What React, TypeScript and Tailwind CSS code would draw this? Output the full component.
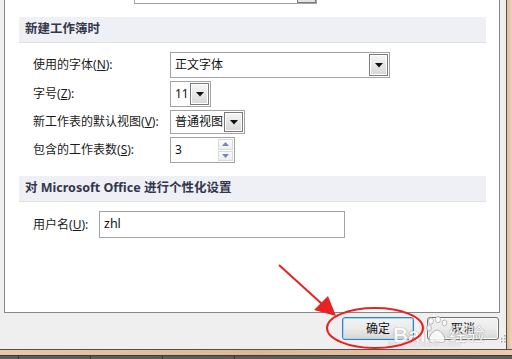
const font = "font-['Noto_Sans','Noto_Sans_CJK_SC',sans-serif]";

const Arrow = () => (
  <svg width="8" height="5" viewBox="0 0 8 5">
    <path d="M0 0H8L4 4.5Z" fill="#111" />
  </svg>
);

const DropButton = () => (
  <div className="h-full w-[19px] border border-[#7a7a7a] bg-gradient-to-b from-[#f6f6f6] to-[#d8d8d8] flex items-center justify-center shadow-[inset_0_0_0_1px_#ffffff]">
    <Arrow />
  </div>
);

const Combo = ({ text, width }: { text: string; width: string }) => (
  <div className={`${width} h-full border border-[#a3a3a3] bg-white flex items-stretch p-[1px]`}>
    <span className="flex-1 pl-[3px] flex items-center text-[12px] text-[#111]">{text}</span>
    <DropButton />
  </div>
);

const Label = ({ text, k, width }: { text: string; k: string; width: string }) => (
  <span className={`${width} text-[12px] text-[#1b1b1b]`}>
    {text}(<span className="underline">{k}</span>):
  </span>
);

const Header = ({ title, className }: { title: string; className: string }) => (
  <div className={`${className} ml-[14px] w-[467px] h-[26px] bg-[#eff0f5] border-b border-[#dfe0e8] flex items-center pl-[6px]`}>
    <span className="text-[12.5px] font-bold text-[#333649]">{title}</span>
  </div>
);

const Button = ({ text, primary }: { text: string; primary?: boolean }) => (
  <div
    className={`w-[72px] h-[23px] rounded-[3px] border flex items-center justify-center text-[12px] text-[#111] bg-gradient-to-b from-[#f3f3f3] via-[#ebebeb] to-[#d6d6d6] ${
      primary ? "border-[#3c7fb1] shadow-[inset_0_0_0_1px_#9ed8f7]" : "border-[#707070] shadow-[inset_0_0_0_1px_#fafafa]"
    }`}
  >
    {text}
  </div>
);

export default function App() {
  return (
    <div className={`w-[512px] h-[359px] overflow-hidden relative bg-[#efefef] ${font}`}>
      <div className="flex h-[349px]">
        <div className="w-[506px] flex flex-col">
          {/* white options panel */}
          <div className="ml-[4px] w-[496px] h-[313px] bg-white border-x border-b border-[#838791] flex flex-col">
            <div className="ml-[129px] w-[183px] h-[4px] border-x border-b border-[#a3a3a3] flex justify-end">
              <div className="w-[19px] h-full border-x border-b border-[#7a7a7a] bg-[#e4e4e4]" />
            </div>

            <Header title="新建工作簿时" className="mt-[13px]" />

            <div className="pl-[28px] flex flex-col">
              <div className="mt-[9px] h-[26px] flex items-center">
                <Label text="使用的字体" k="N" width="w-[137px]" />
                <Combo text="正文字体" width="w-[220px]" />
              </div>
              <div className="mt-[3px] h-[26px] flex items-center">
                <Label text="字号" k="Z" width="w-[137px]" />
                <Combo text="11" width="w-[41px]" />
              </div>
              <div className="mt-[3px] h-[24px] flex items-center">
                <Label text="新工作表的默认视图" k="V" width="w-[137px]" />
                <Combo text="普通视图" width="w-[75px]" />
              </div>
              <div className="mt-[3px] h-[26px] flex items-center">
                <Label text="包含的工作表数" k="S" width="w-[137px]" />
                <div className="w-[65px] h-full border border-[#a3a3a3] bg-white flex p-[1px]">
                  <span className="flex-1 pl-[3px] flex items-center text-[12px] text-[#111]">3</span>
                  <div className="w-[15px] flex flex-col gap-[1px]">
                    <div className="flex-1 border border-[#d5d9e0] bg-gradient-to-b from-[#fbfbfb] to-[#eceef2] flex items-center justify-center">
                      <svg width="7" height="4" viewBox="0 0 7 4"><path d="M0 4H7L3.5 0Z" fill="#6d8bb8" /></svg>
                    </div>
                    <div className="flex-1 border border-[#d5d9e0] bg-gradient-to-b from-[#fbfbfb] to-[#eceef2] flex items-center justify-center">
                      <svg width="7" height="4" viewBox="0 0 7 4"><path d="M0 0H7L3.5 4Z" fill="#6d8bb8" /></svg>
                    </div>
                  </div>
                </div>
              </div>
            </div>

            <Header title="对 Microsoft Office 进行个性化设置" className="mt-[13px]" />

            <div className="pl-[28px] mt-[9px] h-[27px] flex items-center">
              <Label text="用户名" k="U" width="w-[66px]" />
              <div className="w-[246px] h-full border border-[#a3a3a3] bg-white flex items-center pl-[4px] text-[12.5px] text-[#111]">
                zhl
              </div>
            </div>
          </div>

          {/* dialog buttons */}
          <div className="mt-[4px] pr-[7px] flex justify-end gap-[13px]">
            <Button text="确定" primary />
            <Button text="取消" />
          </div>
        </div>
        <div className="w-[1px] bg-[#5b4e45]" />
        <div className="flex-1 bg-gradient-to-r from-[#e2bc9c] to-[#edd2b8]" />
      </div>
      <div className="h-[1px] bg-[#5b4e45]" />
      <div className="h-[5px] bg-gradient-to-r from-[#e9c7a9] via-[#deb896] to-[#ecccb0]" />
      <div className="h-[1px] bg-[#3f3a36]" />
      <div className="h-[3px] bg-[#5d5d5d] flex">
        <div className="w-[19px] border-r border-[#3a3a3a]" />
        <div className="w-[72px] border-r border-[#3a3a3a]" />
        <div className="w-[72px] border-r border-[#3a3a3a]" />
        <div className="w-[72px] border-r border-[#3a3a3a]" />
      </div>

      {/* resize grip */}
      <svg className="absolute left-[499px] top-[334px]" width="7" height="9" viewBox="0 0 7 9">
        {[[5, 1], [5, 4], [2, 4], [5, 7], [2, 7]].map(([x, y]) => (
          <rect key={`${x}-${y}`} x={x} y={y} width="1.5" height="1.5" fill="#a9a9a9" />
        ))}
      </svg>

      {/* baidu watermark */}
      <div className="absolute left-[393px] top-[316px] flex items-end text-white opacity-80 [text-shadow:0_0_1px_#8a8a8a,0_0_1px_#8a8a8a]">
        <span className="text-[21px] font-bold font-['Liberation_Sans',sans-serif] leading-none">Bai</span>
        <svg width="22" height="28" viewBox="0 0 22 28" className="mb-[1px]">
          <g fill="#ffffff" stroke="#9a9a9a" strokeWidth="0.8">
            <ellipse cx="5" cy="5" rx="2.5" ry="3.2" />
            <ellipse cx="12" cy="3.5" rx="2.5" ry="3.2" />
            <ellipse cx="18.5" cy="7" rx="2.3" ry="3" />
            <ellipse cx="3" cy="12" rx="2.3" ry="3" />
            <path d="M4 26c-3-3 2-11 7-12 5 1 10 9 7 12-2 1-4 0-7 0s-5 1-7 0z" />
          </g>
        </svg>
        <span className="text-[18px] leading-none ml-[1px] mb-[2px]">经验</span>
      </div>
      <div className="absolute left-[388px] top-[338px] text-[9px] text-white opacity-80 font-['Liberation_Sans',sans-serif] [text-shadow:0_0_1px_#8a8a8a]">
        jingyan.baidu.com
      </div>

      {/* red annotations */}
      <svg className="absolute left-0 top-0 pointer-events-none" width="512" height="359" viewBox="0 0 512 359">
        <line x1="279" y1="265" x2="322" y2="304" stroke="#e62222" strokeWidth="2" />
        <path d="M336 316L314 310L328 296Z" fill="#e62222" />
        <ellipse cx="375" cy="328" rx="48" ry="20" fill="none" stroke="#e62222" strokeWidth="2" />
      </svg>
    </div>
  );
}
